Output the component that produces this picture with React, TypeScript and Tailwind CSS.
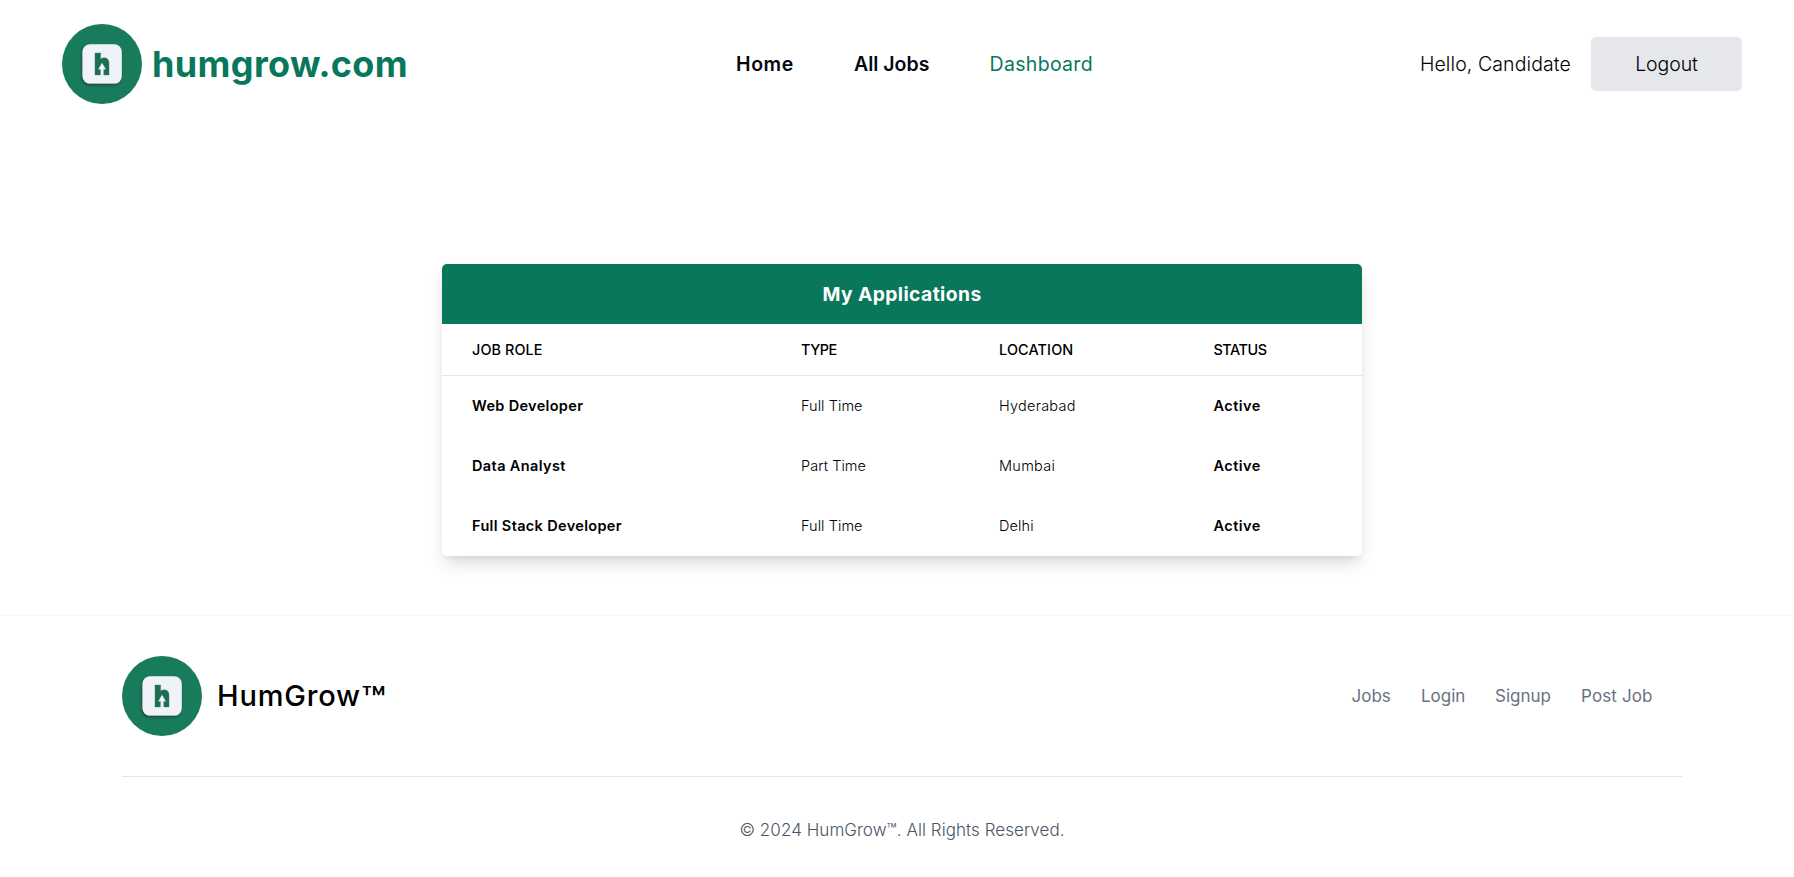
function Logo() {
  return (
    <svg className="h-20 w-20 shrink-0" viewBox="0 0 80 80" aria-hidden="true">
      <defs>
        <filter id="tile-shadow" x="-20%" y="-20%" width="140%" height="140%">
          <feDropShadow dx="-1" dy="1.6" stdDeviation="1.1" floodColor="#22302b" floodOpacity="0.75" />
        </filter>
      </defs>
      <circle cx="40" cy="40" r="40" fill="#187b5c" />
      <rect x="20.5" y="20.3" width="39.3" height="39.3" rx="7.5" fill="#eff3f9" filter="url(#tile-shadow)" />
      <path
        d="M33 29h5.6v6c1-.8 2.2-1.2 3.6-1.200 3 0 4.800 2 4.800 5V51h-5.200v-5.600h2.300L40 38.600l-4 6.800h2.400V51H33z"
        fill="#1c6e52"
        stroke="#3f7d69"
        strokeWidth="0.4"
      />
    </svg>
  );
}

const applications = [
  { role: "Web Developer", roleTracking: "tracking-[0.33px]", type: "Full Time", place: "Hyderabad", placeTracking: "tracking-[0.25px]" },
  { role: "Data Analyst", roleTracking: "tracking-[0.38px]", type: "Part Time", place: "Mumbai", placeTracking: "tracking-[0.28px]" },
  { role: "Full Stack Developer", roleTracking: "tracking-[0.34px]", type: "Full Time", place: "Delhi", placeTracking: "tracking-[0.1px]" },
];

const columns = "grid grid-cols-[329px_198px_214.5px_1fr] items-center pl-[30px]";

export default function App() {
  return (
    <div className="flex h-[877px] flex-col overflow-hidden bg-white font-['Inter',sans-serif] text-black">
      <header className="flex h-32 items-center pr-[52px] pl-[62px]">
        <a className="flex w-[674px] items-center gap-[10px]">
          <Logo />
          <span className="text-[36px] leading-10 font-bold tracking-[0.38px] text-[#09775b]">humgrow.com</span>
        </a>
        <nav className="flex items-center text-[19.5px] leading-7">
          <a className="w-[118px] font-semibold tracking-[0.6px] text-gray-950">Home</a>
          <a className="w-[135.500px] font-semibold text-gray-950">All Jobs</a>
          <a className="tracking-[0.32px] text-[#09775b]">Dashboard</a>
        </nav>
        <div className="ml-auto flex items-center gap-[20px] text-[19.500px] leading-7 font-light">
          <span className="tracking-[0.1px]">Hello, Candidate</span>
          <button className="flex h-[54px] w-[151px] items-center justify-center rounded-[5px] bg-gray-200 tracking-[-0.1px]">
            Logout
          </button>
        </div>
      </header>

      <main className="flex h-[487px] justify-center pt-[136px] pl-[10px]">
        <section className="h-[292px] w-[920px] overflow-hidden rounded-[5px] bg-white shadow-[0_10px_18px_-3px_rgba(0,0,0,0.14),0_4px_8px_-4px_rgba(0,0,0,0.1)]">
          <h1 className="flex h-[60px] items-center justify-center bg-[#09775b] text-[19.25px] font-bold tracking-[0.42px] text-white">
            My Applications
          </h1>
          <div className={`${columns} h-[52px] border-b border-gray-200 text-[14.4px] font-medium`}>
            <span className="tracking-[0.1px]">JOB ROLE</span>
            <span className="tracking-[-0.5px]">TYPE</span>
            <span className="tracking-[0.15px]">LOCATION</span>
            <span className="tracking-[-0.45px]">STATUS</span>
          </div>
          {applications.map((item) => (
            <div key={item.role} className={`${columns} h-[60px] text-[14.500px]`}>
              <span className={`font-semibold ${item.roleTracking}`}>{item.role}</span>
              <span className="font-light tracking-[0.05px]">{item.type}</span>
              <span className={`font-light ${item.placeTracking}`}>{item.place}</span>
              <span className="font-semibold tracking-[0.45px]">Active</span>
            </div>
          ))}
        </section>
      </main>

      <footer className="flex-1 border-t border-gray-100/70 pr-[112px] pl-[122px]">
        <div className="flex h-40 items-center justify-between">
          <a className="flex items-center gap-[15px]">
            <Logo />
            <span className="flex items-center text-[29px] leading-9 font-medium tracking-[0.8px]">
              HumGrow
              <span className="origin-left translate-y-[3px] scale-x-115 text-[35px] leading-9 tracking-normal">™</span>
            </span>
          </a>
          <ul className="flex text-[17px] leading-6 text-gray-500">
            <li className="w-[69.500px]">Jobs</li>
            <li className="w-[74px]">Login</li>
            <li className="w-[86px]">Signup</li>
            <li className="w-[101px] tracking-[0.12px]">Post Job</li>
          </ul>
        </div>
        <hr className="border-gray-200" />
        <p className="mt-[41px] text-center text-[17px] leading-6 font-light tracking-[0.05px] text-gray-600">
          © 2024 HumGrow™. All Rights Reserved.
        </p>
      </footer>
    </div>
  );
}
